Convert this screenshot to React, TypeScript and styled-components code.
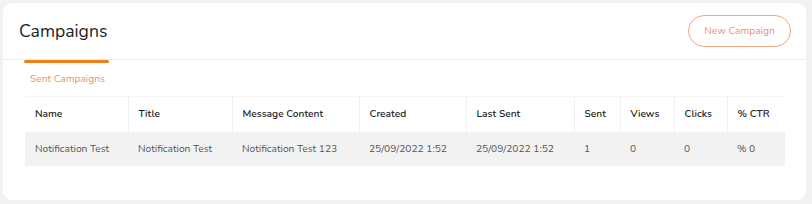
import React from "react";
import styled, { createGlobalStyle } from "styled-components";

const Global = createGlobalStyle`
  html, body { margin: 0; padding: 0; background: #f2f2f2; }
  body { font-family: "Nunito", "Lato", "Open Sans", sans-serif; }
`;

const Page = styled.div`
  padding: 3px 6px 4px 3px;
`;

const Card = styled.div`
  width: 803px;
  height: 197px;
  background: #fff;
  border-radius: 9px;
  box-sizing: border-box;
`;

const Header = styled.div`
  height: 56px;
  display: flex;
  align-items: center;
  justify-content: space-between;
  padding: 0 15px 0 16px;
  border-bottom: 1px solid #efefef;
`;

const Title = styled.h1`
  margin: 0;
  font-size: 17.6px;
  font-weight: 400;
  color: #1d1d1d;
`;

const OutlineButton = styled.button`
  width: 103px;
  height: 32px;
  border: 1px solid #f1a77f;
  border-radius: 16px;
  background: #fff;
  color: #e88f73;
  font-family: inherit;
  font-size: 10.2px;
  padding: 0;
`;

const TabBar = styled.div`
  margin-left: 21px;
  width: 85px;
  height: 3px;
  border-radius: 2px;
  background: #ef7f16;
`;

const TabLabel = styled.div`
  margin: 9px 0 0 27px;
  height: 14px;
  font-size: 10.2px;
  color: #ea9172;
`;

const Table = styled.table`
  margin: 10px 0 0 22px;
  width: 760px;
  border-collapse: collapse;
  table-layout: fixed;
  font-size: 10.2px;
`;

const Th = styled.th<{ w: number }>`
  box-sizing: border-box;
  width: ${(p) => p.w}px;
  height: 35px;
  padding: 0 0 0 10px;
  text-align: left;
  font-weight: 600;
  color: #222;
  border-left: 1px solid #f1f1f1;
  border-top: 1px solid #f6f6f6;
  &:first-child { border-left: none; }
`;

const Td = styled.td`
  box-sizing: border-box;
  height: 34px;
  padding: 0 0 0 10px;
  color: #555;
  background: #f2f2f2;
  white-space: nowrap;
`;

const cols: [string, number][] = [
  ["Name", 103],
  ["Title", 104],
  ["Message Content", 127],
  ["Created", 107],
  ["Last Sent", 108],
  ["Sent", 46],
  ["Views", 54],
  ["Clicks", 53],
  ["% CTR", 58],
];

const row = [
  "Notification Test",
  "Notification Test",
  "Notification Test 123",
  "25/09/2022 1:52",
  "25/09/2022 1:52",
  "1",
  "0",
  "0",
  "% 0",
];

export default function App() {
  return (
    <>
      <Global />
      <Page>
        <Card>
          <Header>
            <Title>Campaigns</Title>
            <OutlineButton>New Campaign</OutlineButton>
          </Header>
          <TabBar />
          <TabLabel>Sent Campaigns</TabLabel>
          <Table>
            <thead>
              <tr>
                {cols.map(([c, w]) => (
                  <Th key={c} w={w}>
                    {c}
                  </Th>
                ))}
              </tr>
            </thead>
            <tbody>
              <tr>
                {row.map((v, i) => (
                  <Td key={i}>{v}</Td>
                ))}
              </tr>
            </tbody>
          </Table>
        </Card>
      </Page>
    </>
  );
}
